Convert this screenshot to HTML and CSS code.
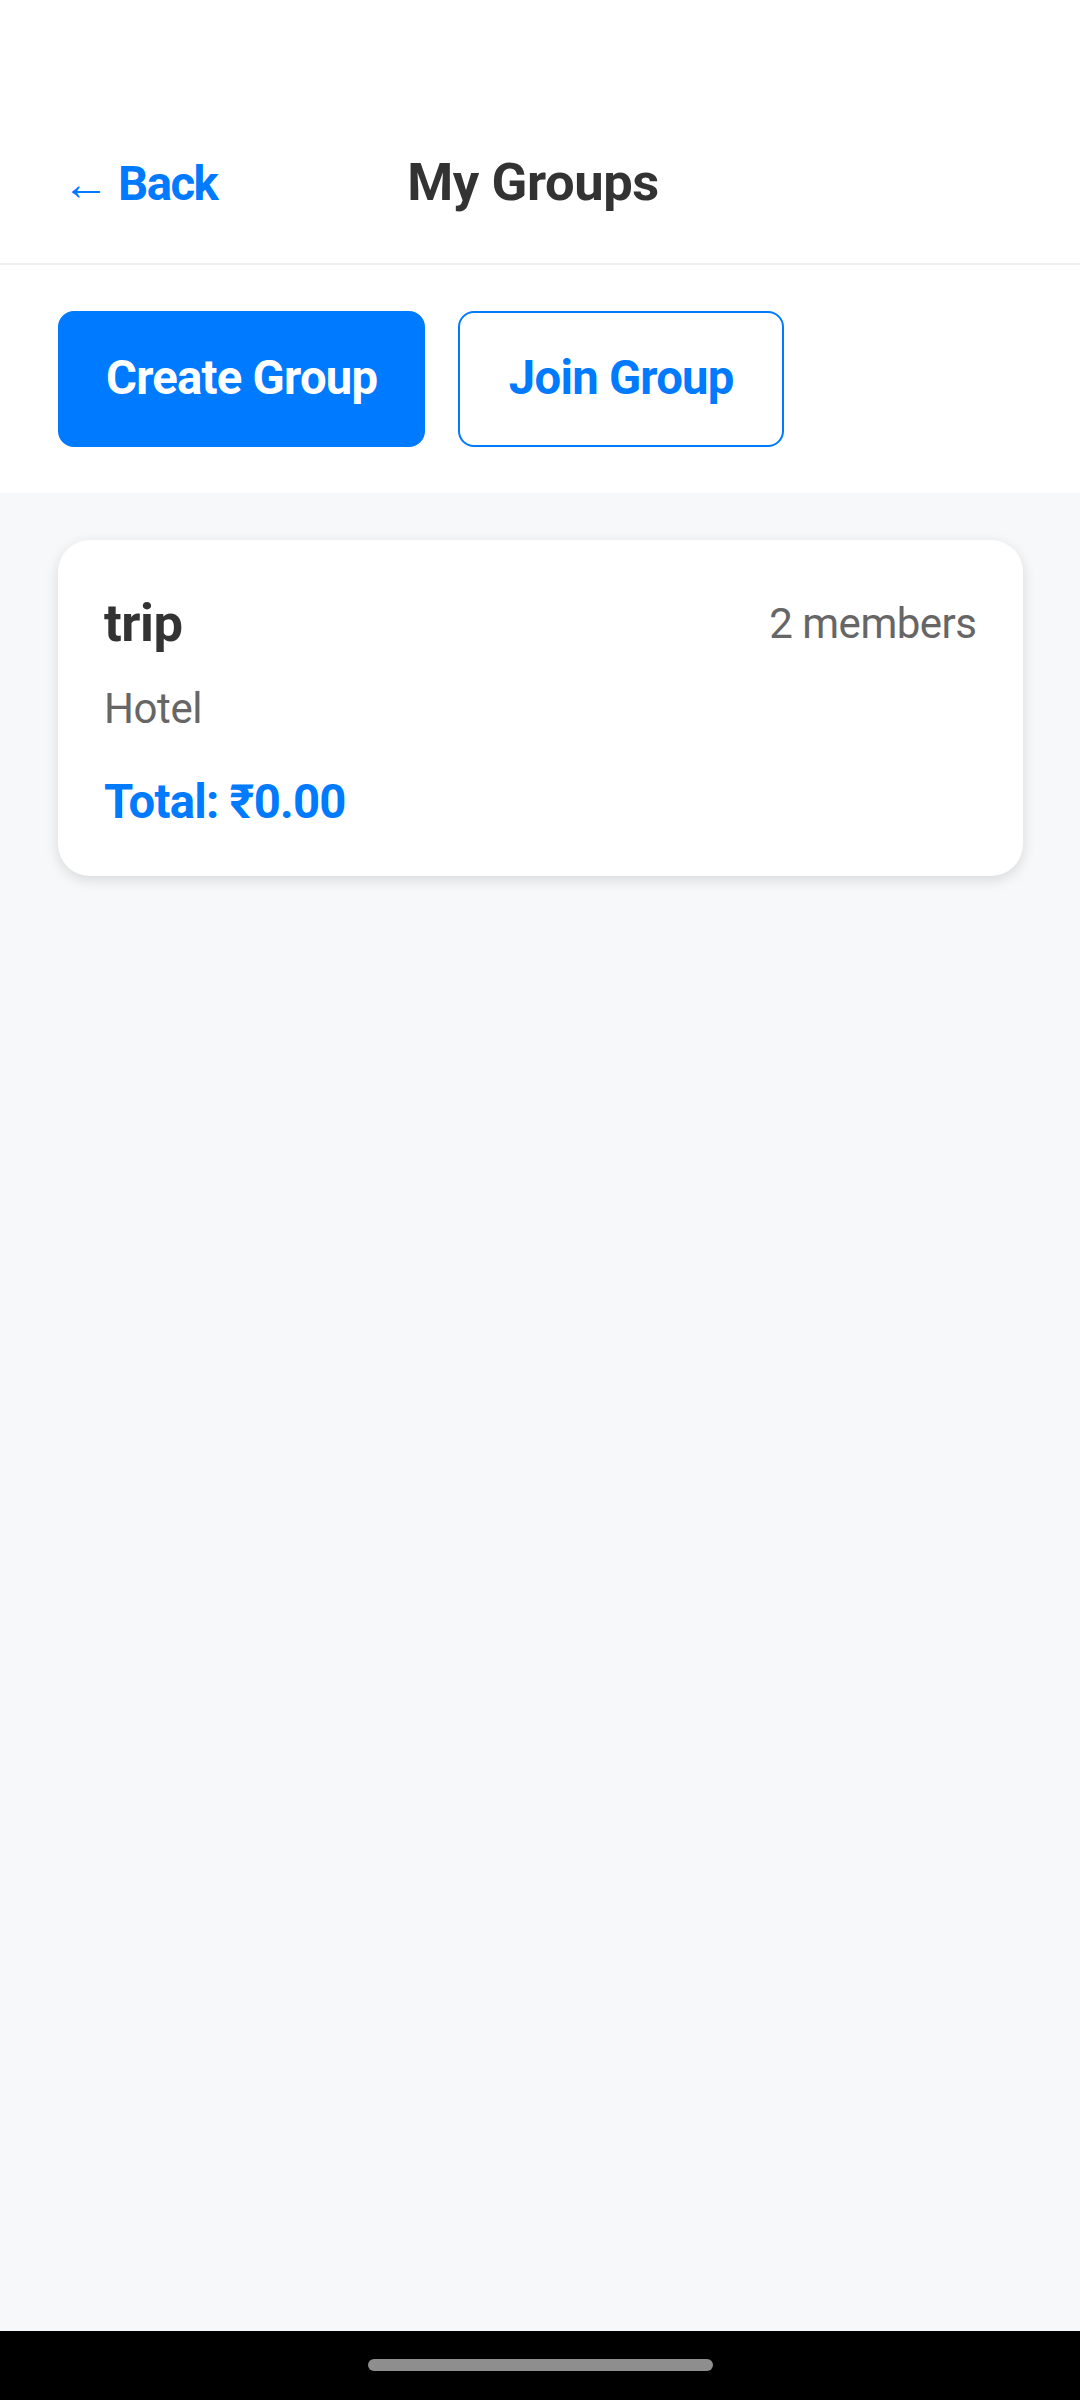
FILE: index.html
```html
<!DOCTYPE html>
<html lang="en">
<head>
<meta charset="utf-8">
<title>My Groups</title>
<link rel="stylesheet" href="styles.css">
</head>
<body>
<div class="screen">
  <header class="header">
    <span class="back"><span class="arrow">←</span> Back</span>
    <h1 class="title">My Groups</h1>
  </header>
  <div class="actions">
    <button class="btn btn-primary">Create Group</button>
    <button class="btn btn-outline">Join Group</button>
  </div>
  <main class="list">
    <div class="card">
      <div class="card-top">
        <span class="card-name">trip</span>
        <span class="card-members">2 members</span>
      </div>
      <div class="card-desc">Hotel</div>
      <div class="card-total">Total: ₹0.00</div>
    </div>
  </main>
  <div class="navbar"><span class="handle"></span></div>
</div>
</body>
</html>
```
FILE: styles.css
```css
* { box-sizing: border-box; }
html, body { margin: 0; padding: 0; }
body {
  font-family: Roboto, "Noto Sans", "Liberation Sans", sans-serif;
  background: #f7f8fa;
  width: 1080px;
  height: 2400px;
  overflow: hidden;
}
.screen {
  display: flex;
  flex-direction: column;
  height: 2400px;
}
.header {
  background: #fff;
  display: flex;
  align-items: baseline;
  padding: 152px 40px 49px 62px;
  border-bottom: 2.6px solid #eeeeee;
}
.back {
  color: #007aff;
  font-size: 47.25px;
  font-weight: 700;
  line-height: 55px;
  letter-spacing: -1.5px;
}
.arrow {
  font-weight: 400;
}
.title {
  margin: 0 0 0 190px;
  color: #333333;
  font-size: 52.5px;
  font-weight: 700;
  line-height: 61.5px;
  letter-spacing: -0.4px;
}
.actions {
  background: #fff;
  display: flex;
  gap: 33px;
  padding: 46px 58px;
}
.btn {
  font-family: inherit;
  font-size: 47.25px;
  font-weight: 700;
  line-height: 55.5px;
  letter-spacing: -0.75px;
  border-radius: 16px;
  height: 136.5px;
  padding: 0 46px;
  border: 2.6px solid #007aff;
  cursor: pointer;
}
.btn-primary {
  background: #007aff;
  color: #fff;
}
.btn-outline {
  background: #fff;
  color: #007aff;
  padding: 0 48.5px;
}
.list {
  flex: 1;
  padding: 47px 57.5px 0 58px;
}
.card {
  background: #fff;
  border-radius: 32px;
  padding: 53px 46px 45px 46px;
  box-shadow: 0 4px 14px rgba(0, 0, 0, 0.13);
}
.card-top {
  display: flex;
  justify-content: space-between;
  align-items: center;
}
.card-name {
  color: #333333;
  font-size: 52.5px;
  font-weight: 700;
  line-height: 61.5px;
  letter-spacing: -0.5px;
}
.card-members {
  color: #666666;
  font-size: 42px;
  line-height: 49px;
  letter-spacing: -0.5px;
}
.card-desc {
  color: #666666;
  font-size: 42px;
  line-height: 49px;
  margin-top: 29px;
  letter-spacing: -0.4px;
}
.card-total {
  color: #007aff;
  font-size: 47.25px;
  font-weight: 700;
  line-height: 55.5px;
  margin-top: 42.5px;
  letter-spacing: -0.75px;
}
.navbar {
  background: #000;
  height: 69px;
  display: flex;
  justify-content: center;
  padding-top: 28px;
}
.handle {
  width: 345px;
  height: 12px;
  border-radius: 6px;
  background: #8e8e8e;
}
```
